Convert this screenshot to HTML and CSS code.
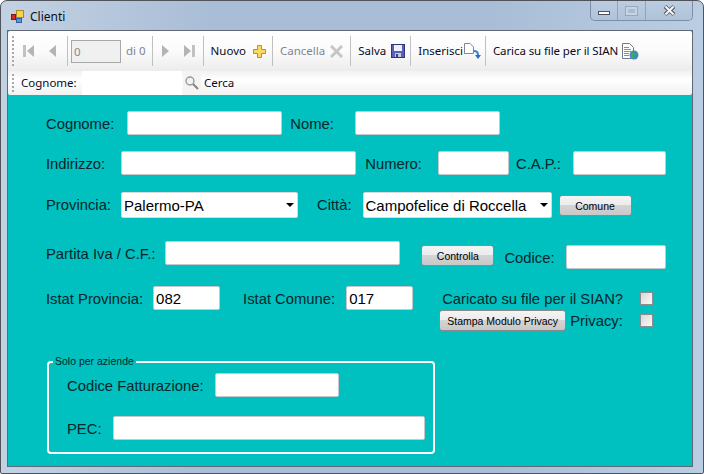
FILE: index.html
```html
<!DOCTYPE html>
<html lang="it">
<head>
    <meta charset="UTF-8">
    <title>Clienti</title>
    <link rel="stylesheet" href="styles.css">
</head>
<body>
    <div class="window">
        <div class="titlebar">
            <svg class="app-icon" width="15" height="15" viewBox="0 0 15 15">
                <rect x="0" y="0" width="15" height="15" fill="#c3cfdd"/>
                <rect x="1.5" y="5.5" width="4" height="5" fill="#d92b20" stroke="#7a1a14"/>
                <rect x="6.5" y="1.5" width="7" height="7" fill="#f7d24a" stroke="#a88a20"/>
                <rect x="6.5" y="9.5" width="5" height="4" fill="#5b94e0" stroke="#2f5fa8"/>
            </svg>
            <span class="title-text">Clienti</span>
            <div class="win-buttons">
                <div class="win-btn win-min"><span></span></div>
                <div class="win-btn win-max"><span></span></div>
                <div class="win-btn win-close">
                    <svg width="13" height="11" viewBox="0 0 13 11">
                        <path d="M2 1.5 L11 9.5 M11 1.5 L2 9.5" stroke="#5a6068" stroke-width="4"/>
                        <path d="M2.5 1.5 L10.5 9.5 M10.5 1.5 L2.5 9.5" stroke="#f4f6f8" stroke-width="2"/>
                    </svg>
                </div>
            </div>
        </div>

        <div class="client">
            <div class="toolbar toolbar-main">
                <div class="grip"></div>
                <svg class="nav-icon first" width="11" height="12" viewBox="0 0 11 12">
                    <rect x="0" y="0" width="3" height="12" fill="#c2c2c2"/>
                    <path d="M11 0 V12 L4 6 Z" fill="#b4b4b4"/>
                </svg>
                <svg class="nav-icon prev" width="7" height="12" viewBox="0 0 7 12">
                    <path d="M7 0 V12 L0 6 Z" fill="#b4b4b4"/>
                </svg>
                <div class="sep sep-a"></div>
                <input class="pos-box" type="text" value="0" disabled>
                <span class="tool-text muted count">di 0</span>
                <div class="sep sep-b"></div>
                <svg class="nav-icon next" width="7" height="12" viewBox="0 0 7 12">
                    <path d="M0 0 V12 L7 6 Z" fill="#b4b4b4"/>
                </svg>
                <svg class="nav-icon last" width="11" height="12" viewBox="0 0 11 12">
                    <path d="M0 0 V12 L7 6 Z" fill="#b4b4b4"/>
                    <rect x="8" y="0" width="3" height="12" fill="#c2c2c2"/>
                </svg>
                <div class="sep sep-c"></div>
                <span class="tool-text">Nuovo</span>
                <svg class="tool-icon plus" width="13" height="13" viewBox="0 0 13 13">
                    <path d="M4.5 0.5 H8.5 V4.5 H12.5 V8.5 H8.5 V12.5 H4.5 V8.5 H0.5 V4.5 H4.5 Z" fill="#fbd95c" stroke="#b8902c"/>
                </svg>
                <div class="sep sep-d"></div>
                <span class="tool-text muted">Cancella</span>
                <svg class="tool-icon cross" width="13" height="13" viewBox="0 0 13 13">
                    <path d="M1 1 L12 12 M12 1 L1 12" stroke="#c6c6c6" stroke-width="3"/>
                </svg>
                <div class="sep sep-d sep-wide"></div>
                <span class="tool-text">Salva</span>
                <svg class="tool-icon floppy" width="14" height="14" viewBox="0 0 14 14">
                    <rect x="0.5" y="0.5" width="13" height="13" fill="#5a5fb8" stroke="#2f3380"/>
                    <rect x="3" y="1" width="8" height="6" fill="#eef0fa"/>
                    <rect x="4" y="9" width="6" height="4" fill="#c8cad8"/>
                    <rect x="5" y="10" width="2" height="3" fill="#3a3e8a"/>
                </svg>
                <div class="sep sep-d sep-tight"></div>
                <span class="tool-text">Inserisci</span>
                <svg class="tool-icon insert" width="17" height="17" viewBox="0 0 17 17">
                    <path d="M0.5 0.5 H6 L9.5 4 V10.5 H0.5 Z" fill="#fff" stroke="#7c8797"/>
                    <path d="M10 8 Q14 8 14 12" fill="none" stroke="#3f83d0" stroke-width="2"/>
                    <path d="M11 12 H17 L14 16 Z" fill="#2a6cc0"/>
                </svg>
                <div class="sep sep-e"></div>
                <span class="tool-text tool-long">Carica su file per il SIAN</span>
                <svg class="tool-icon upload" width="17" height="17" viewBox="0 0 17 17">
                    <path d="M0.5 0.5 H7.5 L11.5 4.5 V15.5 H0.5 Z" fill="#fff" stroke="#6f7a8a"/>
                    <path d="M2 4.5 H7 M2 6.5 H9 M2 8.5 H9 M2 10.5 H7 M2 12.5 H7" stroke="#7f8fa6"/>
                    <circle cx="12" cy="12" r="4.5" fill="#3b8ac4"/>
                    <path d="M9 10 Q12 8 13 11 Q11 14 12 16 Q9 15 9 10 Z" fill="#49a944"/>
                    <path d="M14 9 L16 11 L15 13 Z" fill="#49a944"/>
                </svg>
            </div>

            <div class="toolbar toolbar-search">
                <div class="grip grip-short"></div>
                <span class="tool-text search-label">Cognome:</span>
                <input class="search-input" type="text">
                <div class="search-btn">
                    <svg width="16" height="16" viewBox="0 0 16 16">
                        <circle cx="6" cy="6" r="4" fill="#eef2f6" stroke="#9a9a9a" stroke-width="1.4"/>
                        <path d="M9 9 L14 14" stroke="#8a8078" stroke-width="2"/>
                    </svg>
                </div>
                <span class="tool-text search-text">Cerca</span>
            </div>

            <form class="form">
                <div class="row row-1">
                    <label class="lbl">Cognome:</label>
                    <input class="field f-cognome" type="text">
                    <label class="lbl l-nome">Nome:</label>
                    <input class="field f-nome" type="text">
                </div>
                <div class="row row-2">
                    <label class="lbl">Indirizzo:</label>
                    <input class="field f-indirizzo" type="text">
                    <label class="lbl l-numero">Numero:</label>
                    <input class="field f-numero" type="text">
                    <label class="lbl l-cap">C.A.P.:</label>
                    <input class="field f-cap" type="text">
                </div>
                <div class="row row-3">
                    <label class="lbl">Provincia:</label>
                    <div class="combo c-provincia">
                        <select><option>Palermo-PA</option></select>
                    </div>
                    <label class="lbl l-citta">Città:</label>
                    <div class="combo c-citta">
                        <select><option>Campofelice di Roccella</option></select>
                    </div>
                    <button class="btn b-comune" type="button">Comune</button>
                </div>
                <div class="row row-4">
                    <label class="lbl">Partita Iva / C.F.:</label>
                    <input class="field f-piva" type="text">
                    <button class="btn b-controlla" type="button">Controlla</button>
                    <label class="lbl l-codice">Codice:</label>
                    <input class="field f-codice" type="text">
                </div>
                <div class="row row-5">
                    <label class="lbl">Istat Provincia:</label>
                    <input class="field f-istat" type="text" value="082">
                    <label class="lbl l-comune">Istat Comune:</label>
                    <input class="field f-istat-c" type="text" value="017">
                    <div class="side">
                        <div class="side-row">
                            <label class="lbl l-sian">Caricato su file per il SIAN?</label>
                            <input class="check" type="checkbox">
                        </div>
                        <div class="side-row">
                            <button class="btn b-stampa" type="button">Stampa Modulo Privacy</button>
                            <label class="lbl l-privacy">Privacy:</label>
                            <input class="check" type="checkbox">
                        </div>
                    </div>
                </div>
                <fieldset class="group">
                    <legend>Solo per aziende</legend>
                    <div class="row">
                        <label class="lbl">Codice Fatturazione:</label>
                        <input class="field f-fatt" type="text">
                    </div>
                    <div class="row row-pec">
                        <label class="lbl">PEC:</label>
                        <input class="field f-pec" type="text">
                    </div>
                </fieldset>
            </form>
        </div>
    </div>
</body>
</html>
```

FILE: styles.css
```css
body {
    margin: 0;
    font-family: "Liberation Sans", Arial, sans-serif;
    background-color: #fff;
}
.window {
    box-sizing: border-box;
    width: 704px;
    height: 474px;
    border: 1px solid #50545a;
    border-radius: 7px 7px 2px 2px;
    background: linear-gradient(90deg, #c3d2e3 0%, #a9bdd6 30%, #a9bdd6 70%, #bacde2 100%);
    overflow: hidden;
}
.titlebar {
    display: flex;
    align-items: flex-start;
    height: 29px;
    padding-left: 9px;
}
.app-icon {
    margin-top: 8px;
}
.title-text {
    margin: 8px 0 0 5px;
    font-family: "Noto Sans", sans-serif;
    font-size: 12px;
    line-height: 16px;
    color: #0a0f18;
}
.win-buttons {
    display: flex;
    height: 20px;
    margin: 0 10px 0 auto;
    border: 1px solid #7d8fa6;
    border-top: none;
    border-radius: 0 0 5px 5px;
    box-sizing: border-box;
}
.win-btn {
    display: flex;
    align-items: center;
    justify-content: center;
    height: 100%;
    border-left: 1px solid #8fa3bb;
    background: linear-gradient(#bccde0, #aec2d9);
}
.win-min {
    width: 26px;
    border-left: none;
    border-radius: 0 0 0 5px;
}
.win-min span {
    width: 10px;
    height: 2px;
    margin-top: 4px;
    background: #fff;
    border: 1px solid #4c535c;
}
.win-max {
    width: 27px;
}
.win-max span {
    width: 7px;
    height: 4px;
    border: 2px solid #c8d4e2;
    outline: 1px solid #98a9be;
    background: #a9bcd2;
}
.win-close {
    width: 46px;
    border-radius: 0 0 5px 0;
}
.client {
    box-sizing: border-box;
    width: 686px;
    height: 437px;
    margin-left: 6px;
    border: 1px solid #5f6874;
    background-color: #00c0c0;
}
.toolbar {
    display: flex;
    align-items: center;
    font-family: "Noto Sans", sans-serif;
    font-size: 11.5px;
    color: #0a0a1e;
}
.toolbar-main {
    height: 40px;
    padding-left: 4px;
    background: linear-gradient(#ffffff, #fbfbfb 50%, #ececec);
    border-radius: 2px 2px 0 0;
}
.toolbar-search {
    height: 24px;
    padding-left: 4px;
    background: linear-gradient(#f1f1f1, #ffffff 35%, #f1f1f1);
    border-radius: 0 0 2px 2px;
}
.grip {
    width: 2px;
    height: 30px;
    background: repeating-linear-gradient(#a8a8a8 0 2px, transparent 2px 4px);
}
.grip-short {
    height: 18px;
}
.sep {
    width: 1px;
    height: 30px;
    background-color: #c0c0c0;
}
.tool-text {
    margin-bottom: 2px;
}
.muted {
    color: #7d8590;
}
.tool-long {
    letter-spacing: -0.1px;
}
.nav-icon.first { margin-left: 9px; }
.nav-icon.prev { margin-left: 15px; }
.sep-a { margin-left: 11px; }
.pos-box {
    box-sizing: border-box;
    width: 50px;
    height: 23px;
    margin-left: 3px;
    padding: 0 2px;
    border: 1px solid #a8a8a8;
    background-color: #f0f0f0;
    font-family: "Noto Sans", sans-serif;
    font-size: 11.5px;
    color: #8a8a8a;
}
.count { margin-left: 5px; }
.sep-b { margin-left: 6px; }
.nav-icon.next { margin-left: 9px; }
.nav-icon.last { margin-left: 15px; }
.sep-c { margin: 0 7px 0 8px; }
.sep-d { margin: 0 7px 0 6px; }
.sep-wide { margin-left: 7px; }
.sep-tight { margin-left: 5px; }
.sep-e { margin: 0 7px 0 4px; }
.plus { margin-left: 7px; }
.cross { margin-left: 5px; }
.floppy { margin-left: 5px; }
.insert { margin-left: 1px; }
.upload { margin-left: 4px; }
.search-label {
    margin-left: 7px;
    width: 61px;
}
.search-input {
    box-sizing: border-box;
    width: 100px;
    height: 24px;
    padding: 0 2px;
    border: none;
    background-color: #fff;
}
.search-btn {
    display: flex;
    align-items: center;
    justify-content: center;
    width: 18px;
    height: 24px;
    margin-left: 1px;
    background-color: #f4f4f4;
}
.search-text { margin-left: 3px; }

.form {
    padding: 16px 0 0 38px;
}
.row {
    display: flex;
    align-items: flex-start;
}
.row-2 { margin-top: 15px; }
.row-3 { margin-top: 16px; }
.row-4 { margin-top: 23px; }
.row-5 { margin-top: 16px; }
.row-pec { margin-top: 18px; }
.lbl {
    padding-top: 2px;
    font-size: 14.8px;
    line-height: 23px;
    color: #06262a;
    white-space: nowrap;
}
.field {
    box-sizing: border-box;
    height: 24px;
    padding: 0 2px;
    border: 1px solid #c4c9ce;
    border-radius: 2px;
    background-color: #fff;
    font-family: "Liberation Sans", Arial, sans-serif;
    font-size: 15px;
    color: #000;
}
.f-cognome { width: 155px; margin-left: 13px; }
.l-nome { margin-left: 8px; }
.f-nome { width: 145px; margin-left: 21px; }
.f-indirizzo { width: 235px; margin-left: 16px; }
.l-numero { margin-left: 9px; }
.f-numero { width: 71px; margin-left: 16px; }
.l-cap { margin-left: 7px; }
.f-cap { width: 93px; margin-left: 12px; }
.combo {
    position: relative;
    height: 26px;
}
.combo::after {
    content: "";
    position: absolute;
    right: 4px;
    top: 11px;
    border-left: 4px solid transparent;
    border-right: 4px solid transparent;
    border-top: 4px solid #000;
}
.combo select {
    box-sizing: border-box;
    width: 100%;
    height: 26px;
    padding: 0 0 0 2px;
    border: 1px solid #d5dade;
    border-radius: 2px;
    background-color: #fff;
    font-family: "Liberation Sans", Arial, sans-serif;
    font-size: 15px;
    color: #000;
    appearance: none;
}
.c-provincia { width: 177px; margin-left: 10px; }
.l-citta { margin-left: 19px; }
.c-citta { width: 189px; margin-left: 11px; }
.btn {
    box-sizing: border-box;
    height: 21px;
    padding: 0;
    border: 1px solid #8a8a8a;
    border-radius: 3px;
    background: linear-gradient(#f4f4f4, #ececec 45%, #d4d4d4 50%, #c8c8c8);
    font-family: "Liberation Sans", Arial, sans-serif;
    font-size: 10.5px;
    color: #000;
}
.b-comune { width: 73px; margin: 3px 0 0 7px; }
.f-piva { width: 235px; margin-left: 10px; }
.b-controlla { width: 73px; margin: 4px 0 0 21px; }
.l-codice { margin: 4px 0 0 10px; }
.f-codice { width: 100px; margin: 4px 0 0 11px; }
.f-istat { width: 67px; margin-left: 10px; }
.l-comune { margin-left: 23px; }
.f-istat-c { width: 67px; margin-left: 11px; }
.side {
    margin-left: 26px;
}
.side-row {
    display: flex;
    align-items: center;
    height: 24px;
}
.side-row + .side-row {
    height: 21px;
}
.check {
    box-sizing: border-box;
    width: 13px;
    height: 13px;
    margin: 0;
    appearance: none;
    border: 1px solid #8e8e8e;
    background: linear-gradient(135deg, #d8d8d8, #fafafa);
}
.l-sian { margin-left: 3px; width: 198px; }
.b-stampa { width: 127px; margin-left: 0; }
.l-privacy { margin-left: 4px; width: 70px; }
.group {
    box-sizing: border-box;
    width: 388px;
    height: 99px;
    margin: 24px 0 0 1px;
    padding: 5px 0 0 18px;
    border: 2px solid #fff;
    border-radius: 4px;
    min-width: 0;
}
.group legend {
    margin-left: -14px;
    padding: 0 2px;
    font-size: 10.5px;
    line-height: 13px;
    color: #06262a;
}
.f-fatt { width: 124px; margin-left: 11px; }
.f-pec { width: 312px; margin-left: 11px; }
```
